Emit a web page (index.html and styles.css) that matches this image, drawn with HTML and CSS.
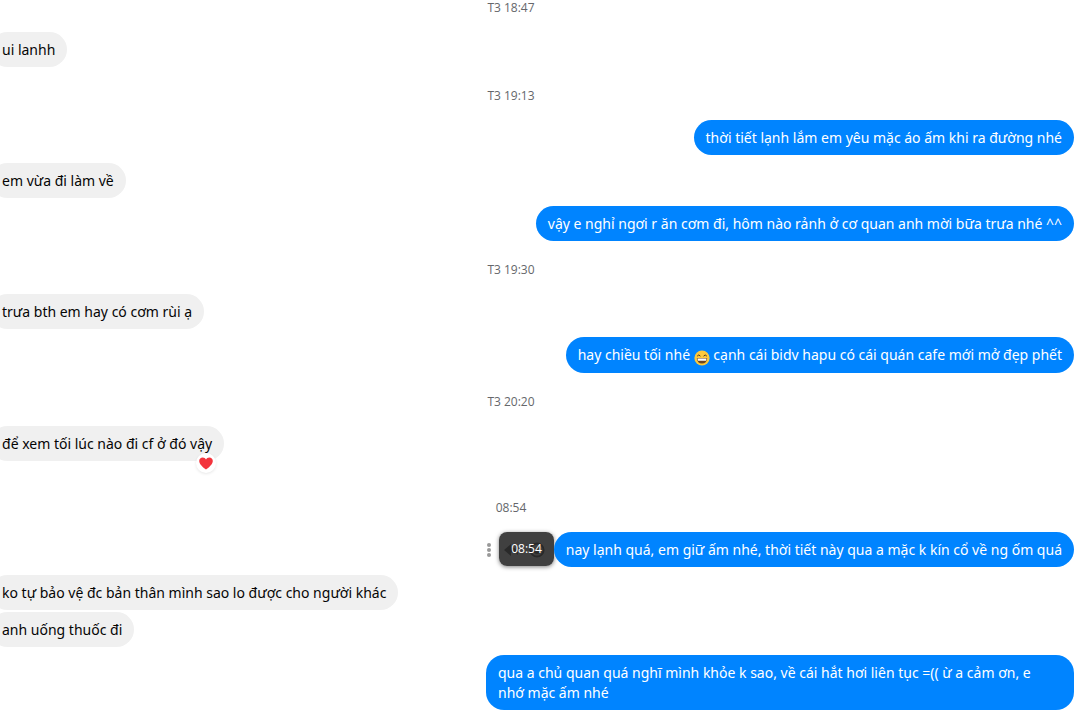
FILE: index.html
```
<!DOCTYPE html>
<html lang="vi">
<head>
    <meta charset="UTF-8">
    <meta name="viewport" content="width=device-width, initial-scale=1.0">
    <title>Chat</title>
    <link rel="stylesheet" href="styles.css">
</head>
<body>
    <main class="chat">
        <div class="time">T3 18:47</div>
        <div class="message received"><div class="bubble">ui lanhh</div></div>

        <div class="time">T3 19:13</div>
        <div class="message sent"><div class="bubble">thời tiết lạnh lắm em yêu mặc áo ấm khi ra đường nhé</div></div>
        <div class="message received"><div class="bubble">em vừa đi làm về</div></div>
        <div class="message sent"><div class="bubble">vậy e nghỉ ngơi r ăn cơm đi, hôm nào rảnh ở cơ quan anh mời bữa trưa nhé ^^</div></div>

        <div class="time">T3 19:30</div>
        <div class="message received"><div class="bubble">trưa bth em hay có cơm rùi ạ</div></div>
        <div class="message sent">
            <div class="bubble">hay chiều tối nhé
                <svg class="emoji" viewBox="0 0 16 16" role="img" aria-label="cười">
                    <circle cx="8" cy="8" r="7.6" fill="#fcc93c"/>
                    <path d="M3.4 5.8 Q4.8 3.8 6.2 5.8 M9.8 5.8 Q11.2 3.8 12.6 5.8" fill="none" stroke="#4a3420" stroke-width="1" stroke-linecap="round"/>
                    <path d="M2.8 8 H13.2 Q12.8 13.6 8 13.6 Q3.2 13.6 2.8 8 Z" fill="#6b4522"/>
                    <path d="M3.4 8.4 H12.6 L12 10.8 H4 Z" fill="#fff"/>
                </svg>
                cạnh cái bidv hapu có cái quán cafe mới mở đẹp phết</div>
        </div>

        <div class="time">T3 20:20</div>
        <div class="message received reacted">
            <div class="bubble">để xem tối lúc nào đi cf ở đó vậy
                <button class="reaction" type="button" aria-label="Yêu thích">
                    <svg viewBox="0 0 14 13"><path d="M7 12.6 C4.5 10.5 0.2 7.6 0.2 4 C0.2 1.8 1.8 0.4 3.7 0.4 C5.2 0.4 6.4 1.2 7 2.5 C7.6 1.2 8.8 0.4 10.3 0.4 C12.2 0.4 13.8 1.8 13.8 4 C13.8 7.6 9.5 10.5 7 12.6 Z" fill="#f3343c"/></svg>
                </button>
            </div>
        </div>

        <div class="time">08:54</div>
        <div class="message sent">
            <div class="actions">
                <button type="button" class="more" aria-label="Xem thêm">
                    <svg viewBox="0 0 6 16"><circle cx="3" cy="3" r="2"/><circle cx="3" cy="8" r="2"/><circle cx="3" cy="13" r="2"/></svg>
                </button>
                <button type="button" aria-label="Trả lời">
                    <svg viewBox="0 0 16 16"><path d="M1 8 L8 2 V5.5 C13 5.5 15 9 15 13 C13 10.5 11 10 8 10.2 V14 Z"/></svg>
                </button>
                <button type="button" aria-label="Bày tỏ cảm xúc">
                    <svg viewBox="0 0 16 16"><circle class="ring" cx="8" cy="8" r="6.6"/><circle cx="5.6" cy="6.6" r="1"/><circle cx="10.4" cy="6.6" r="1"/><path d="M4.5 9 H11.5 Q11 12 8 12 Q5 12 4.5 9 Z"/></svg>
                </button>
                <span class="tooltip" role="tooltip">08:54</span>
            </div>
            <div class="bubble">nay lạnh quá, em giữ ấm nhé, thời tiết này qua a mặc k kín cổ về ng ốm quá</div>
        </div>
        <div class="message received"><div class="bubble">ko tự bảo vệ đc bản thân mình sao lo được cho người khác</div></div>
        <div class="message received"><div class="bubble">anh uống thuốc đi</div></div>
        <div class="message sent"><div class="bubble">qua a chủ quan quá nghĩ mình khỏe k sao, về cái hắt hơi liên tục =(( ừ a cảm ơn, e nhớ&nbsp;mặc ấm nhé</div></div>
    </main>
</body>
</html>
```
FILE: styles.css
```
body {
    margin: 0;
    background-color: #fff;
    font-family: "Noto Sans", "Open Sans", sans-serif;
    font-size: 14px;
    line-height: 20px;
    color: #050505;
}

.chat {
    display: flex;
    flex-direction: column;
    padding-right: 8px;
    overflow: hidden;
}

/* Timestamps between groups of messages */
.time {
    padding: 21px 52px 17px 0;
    font-family: "Open Sans", sans-serif;
    font-size: 12px;
    line-height: 15px;
    font-weight: 500;
    text-align: center;
    color: #65676b;
}

.time:first-child {
    padding-top: 0;
}

.message {
    display: flex;
}

.received {
    margin-left: -10px; /* bubbles run under the left edge */
}

.sent {
    justify-content: flex-end;
}

.received + .sent,
.sent + .received {
    margin-top: 8px;
}

.received + .received {
    margin-top: 2px;
}

.bubble {
    position: relative;
    max-width: 564px;
    padding: 8px 12px 7px;
    border-radius: 18px;
    background-color: #f0f0f0;
}

.sent .bubble {
    background-color: #0084ff;
    color: #fff;
}

.emoji {
    width: 16px;
    height: 16px;
    vertical-align: -6px;
}

button {
    display: flex;
    align-items: center;
    justify-content: center;
    padding: 0;
    border: none;
    background: none;
    cursor: pointer;
}

.reacted {
    margin-bottom: 18px;
}

.reaction {
    position: absolute;
    right: 8px;
    bottom: -12px;
    width: 20px;
    height: 20px;
    border-radius: 10px;
    background-color: #fff;
    box-shadow: 0 1px 3px rgba(0, 0, 0, 0.1);
}

.reaction svg {
    width: 14px;
    height: 13px;
}

/* Hover buttons next to a message */
.actions {
    position: relative;
    display: flex;
    align-items: center;
    padding-right: 4px;
}

.actions button {
    width: 26px;
    height: 26px;
}

.actions svg {
    width: 16px;
    height: 16px;
    fill: #444;
}

.actions .ring {
    fill: none;
    stroke: #444;
    stroke-width: 2;
}

.actions .more {
    width: 18px;
}

.actions .more svg {
    fill: #999;
}

.tooltip {
    position: absolute;
    right: 0;
    top: 0;
    padding: 7px 12px;
    border-radius: 8px;
    background-color: rgba(38, 38, 38, 0.88);
    box-shadow: 0 1px 4px rgba(0, 0, 0, 0.5);
    font-family: "Open Sans", sans-serif;
    font-size: 12px;
    font-weight: 500;
    color: #fff;
}
```
